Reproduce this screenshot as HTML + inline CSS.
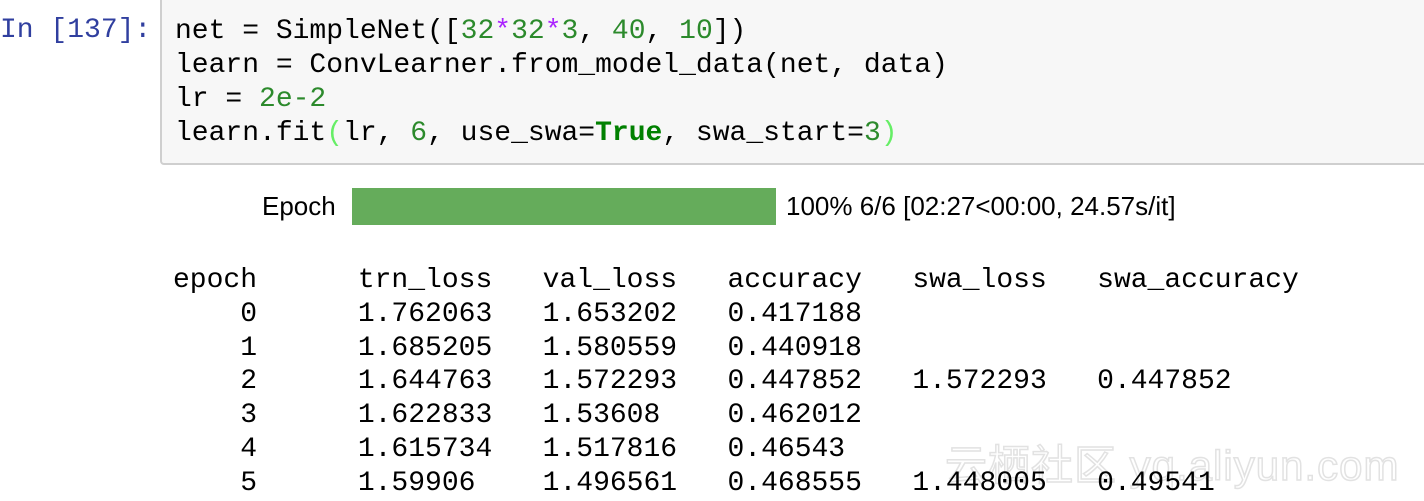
<!DOCTYPE html>
<html><head><meta charset="utf-8"><style>
body{margin:0;width:1424px;height:493px;background:#fff;position:relative;overflow:hidden}
.m{font-family:"Liberation Mono",monospace;font-size:28px;white-space:pre;position:absolute}
.prompt{left:0;top:15px;color:#303f9f}
.box{position:absolute;left:160px;top:-6px;width:1280px;height:167px;background:#f7f7f7;border:2px solid #cfcfcf;border-radius:4px}
.code{left:175px;top:15px;line-height:34px;color:#000}
.n{color:#2c8a2c}.o{color:#aa22ff}.k{color:#008000;font-weight:bold}.p{color:#66ee66}
.s{font-family:"Liberation Sans",sans-serif;font-size:26px;position:absolute;color:#000}
.bar{position:absolute;left:352px;top:188px;width:424px;height:37px;background:#65ac5b}
.tbl{left:173px;top:264px;line-height:33.8px;color:#000}
.wm{position:absolute;left:945px;top:432px;font-family:"Liberation Sans","Noto Sans CJK SC",sans-serif;font-size:42px;color:#fff;-webkit-text-stroke:1.5px #e2e2e2;white-space:nowrap;letter-spacing:1px}
</style></head><body>
<div class="m prompt">In [137]:</div>
<div class="box"></div>
<div class="m code">net = SimpleNet([<span class="n">32</span><span class="o">*</span><span class="n">32</span><span class="o">*</span><span class="n">3</span>, <span class="n">40</span>, <span class="n">10</span>])
learn = ConvLearner.from_model_data(net, data)
lr = <span class="n">2e-2</span>
learn.fit<span class="p">(</span>lr, <span class="n">6</span>, use_swa=<span class="k">True</span>, swa_start=<span class="n">3</span><span class="p">)</span></div>
<div class="s" style="left:262px;top:191px">Epoch</div>
<div class="bar"></div>
<div class="s" style="left:786px;top:191px">100% 6/6 [02:27&lt;00:00, 24.57s/it]</div>
<div class="wm">云栖社区 yq.aliyun.com</div>
<div class="m tbl">epoch      trn_loss   val_loss   accuracy   swa_loss   swa_accuracy
    0      1.762063   1.653202   0.417188
    1      1.685205   1.580559   0.440918
    2      1.644763   1.572293   0.447852   1.572293   0.447852
    3      1.622833   1.53608    0.462012
    4      1.615734   1.517816   0.46543
    5      1.59906    1.496561   0.468555   1.448005   0.49541</div>
</body></html>
